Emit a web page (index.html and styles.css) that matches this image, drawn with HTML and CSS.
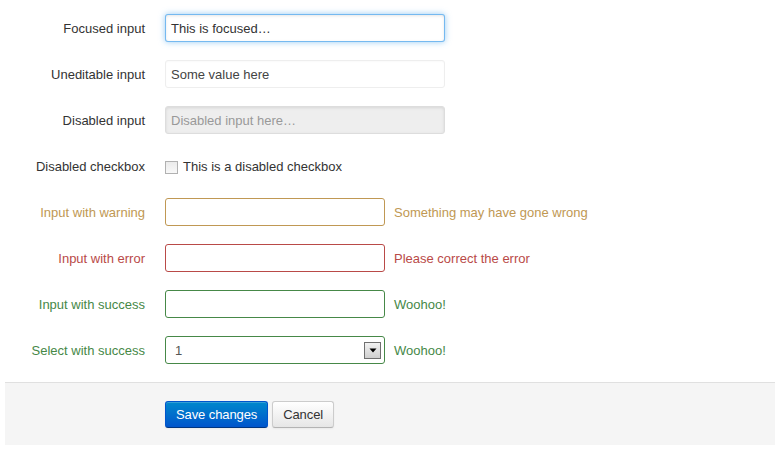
FILE: index.html
```html
<!DOCTYPE html>
<html>
<head>
<meta charset="utf-8">
<link rel="stylesheet" href="styles.css">
</head>
<body>
<form class="form">
  <div class="group">
    <label class="label">Focused input</label>
    <div class="controls"><div class="input wide focused">This is focused…</div></div>
  </div>
  <div class="group">
    <label class="label">Uneditable input</label>
    <div class="controls"><div class="input wide uneditable">Some value here</div></div>
  </div>
  <div class="group">
    <label class="label">Disabled input</label>
    <div class="controls"><div class="input wide disabled">Disabled input here…</div></div>
  </div>
  <div class="group">
    <label class="label">Disabled checkbox</label>
    <div class="controls"><label class="checkbox"><span class="box"></span>This is a disabled checkbox</label></div>
  </div>
  <div class="group warning">
    <label class="label">Input with warning</label>
    <div class="controls"><div class="input"></div><span class="help">Something may have gone wrong</span></div>
  </div>
  <div class="group error">
    <label class="label">Input with error</label>
    <div class="controls"><div class="input"></div><span class="help">Please correct the error</span></div>
  </div>
  <div class="group success">
    <label class="label">Input with success</label>
    <div class="controls"><div class="input"></div><span class="help">Woohoo!</span></div>
  </div>
  <div class="group success">
    <label class="label">Select with success</label>
    <div class="controls"><div class="input select"><span>1</span><span class="arrow"><svg width="8" height="5" viewBox="0 0 8 5"><path d="M0.5 0.5h7L4 4.5z" fill="#000"/></svg></span></div><span class="help">Woohoo!</span></div>
  </div>
  <div class="actions">
    <button type="button" class="btn primary">Save changes</button>
    <button type="button" class="btn">Cancel</button>
  </div>
</form>
</body>
</html>
```
FILE: styles.css
```css
body {
  margin: 0;
  font-family: "Liberation Sans", Arial, sans-serif;
  font-size: 13px;
  line-height: 18px;
  color: #333;
  background: #fff;
}
.form {
  width: 770px;
  margin: 14px 0 0 5px;
}
.group {
  display: flex;
  margin-bottom: 18px;
}
.label {
  width: 140px;
  padding-top: 6px;
  text-align: right;
  flex-shrink: 0;
}
.controls {
  margin-left: 20px;
  height: 28px;
  display: flex;
  align-items: center;
}
.input {
  box-sizing: border-box;
  width: 220px;
  height: 28px;
  padding: 5px 5px 3px;
  border: 1px solid #ccc;
  border-radius: 3px;
  color: #555;
  background: #fff;
  box-shadow: inset 0 1px 3px rgba(0,0,0,0.1);
}
.wide { width: 280px; }
.focused {
  border-color: rgba(82,168,236,0.8);
  box-shadow: inset 0 1px 3px rgba(0,0,0,0.1), 0 0 6px rgba(82,168,236,0.6);
  color: #333;
}
.uneditable {
  border-color: #eee;
  background: #fff;
  box-shadow: inset 0 1px 2px rgba(0,0,0,0.025);
  color: #444;
}
.disabled {
  background: #eee;
  border-color: #ddd;
  color: #999;
}
.checkbox {
  display: flex;
  align-items: center;
  color: #333;
  padding-top: 2px;
}
.box {
  box-sizing: border-box;
  width: 13px;
  height: 13px;
  border: 1px solid #b1b1b1;
  background: linear-gradient(#ebebeb, #f8f8f8);
  margin-right: 5px;
}
.help { margin-left: 9px; padding-top: 2px; }
.warning .label, .warning .help { color: #c09853; }
.warning .input { border-color: #c09853; box-shadow: none; }
.error .label, .error .help { color: #b94a48; }
.error .input { border-color: #b94a48; box-shadow: none; }
.success .label, .success .help { color: #468847; }
.success .input { border-color: #468847; box-shadow: none; }
.select {
  display: flex;
  align-items: center;
  justify-content: space-between;
  padding: 0 3px 0 9px;
}
.select > span:first-child { padding-top: 2px; }
.arrow {
  box-sizing: border-box;
  width: 17px;
  height: 17px;
  border: 1px solid #707070;
  background: linear-gradient(#f2f2f2, #cfcfcf);
  display: flex;
  align-items: center;
  justify-content: center;
}
.arrow svg { display: block; }
.actions {
  margin-top: 18px;
  padding: 18px 20px 17px 160px;
  background: #f5f5f5;
  border-top: 1px solid #e0e0e0;
  display: flex;
  gap: 4px;
}
.btn {
  font-family: "Liberation Sans", Arial, sans-serif;
  font-size: 13px;
  line-height: 18px;
  height: 27px;
  padding: 4px 10px 3px;
  border: 1px solid #ccc;
  border-bottom-color: #b3b3b3;
  border-radius: 3px;
  color: #333;
  background: linear-gradient(#ffffff, #e6e6e6);
  box-shadow: inset 0 1px 0 rgba(255,255,255,0.2), 0 1px 2px rgba(0,0,0,0.05);
  cursor: pointer;
  letter-spacing: -0.1px;
}
.primary {
  color: #fff;
  background: linear-gradient(#0088cc, #0055cc);
  border-color: #0055cc #0055cc #003580;
}
```
